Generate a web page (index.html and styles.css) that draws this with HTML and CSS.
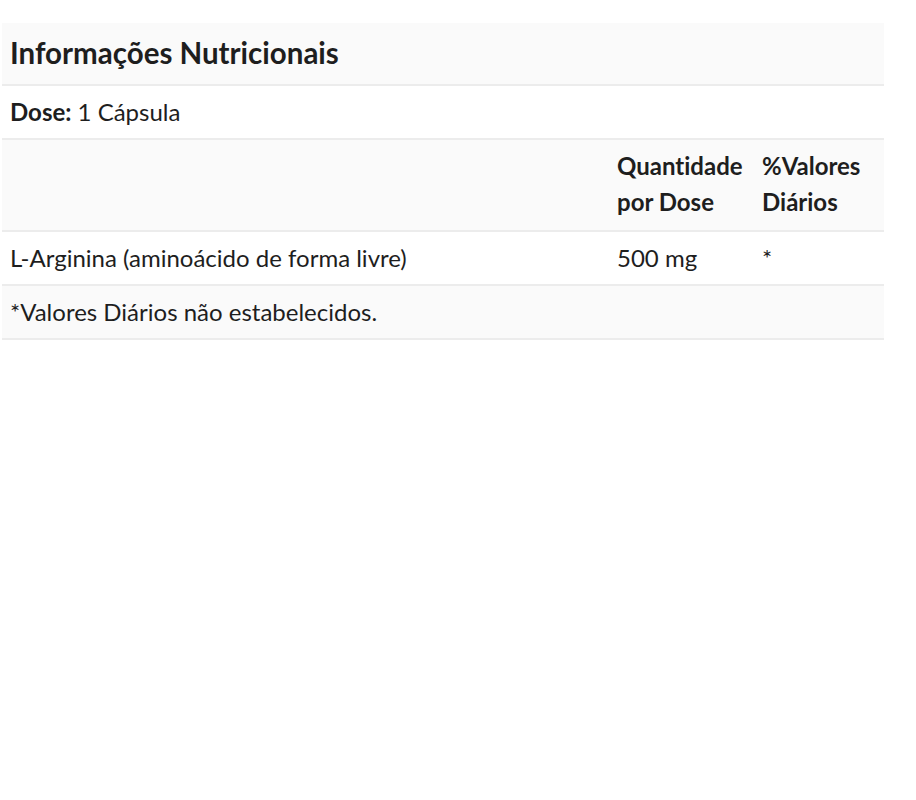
FILE: index.html
```
<!DOCTYPE html>
<html lang="pt">
  <head>
    <meta charset="UTF-8" />
    <meta name="viewport" content="width=device-width, initial-scale=1.0" />
    <title>Informações Nutricionais</title>
    <link rel="stylesheet" href="styles.css">
  </head>
  <body>
    <div class="facts-container">
      <table class="facts-table">
        <colgroup>
          <col class="col-name" />
          <col class="col-amount" />
          <col class="col-daily" />
        </colgroup>
        <thead>
          <tr class="title-row">
            <th colspan="3">Informações Nutricionais</th>
          </tr>
        </thead>
        <tbody>
          <tr class="dose-row">
            <td colspan="3"><strong>Dose:</strong> 1 Cápsula</td>
          </tr>
          <tr class="head-row">
            <td></td>
            <td><strong>Quantidade por Dose</strong></td>
            <td><strong>%Valores Diários</strong></td>
          </tr>
          <tr>
            <td>L-Arginina (aminoácido de forma livre)</td>
            <td>500 mg</td>
            <td>*</td>
          </tr>
          <tr class="note-row">
            <td colspan="3">*Valores Diários não estabelecidos.</td>
          </tr>
        </tbody>
      </table>
    </div>
  </body>
</html>
```

FILE: styles.css
```
body {
  margin: 0;
  background-color: #ffffff;
  font-family: Lato, "Open Sans", sans-serif;
  color: #1e1e1e;
}

.facts-container {
  padding: 23px 0 0 2px;
  width: 882px;
}

.facts-table {
  width: 100%;
  border-collapse: collapse;
  table-layout: fixed;
  font-size: 24px;
  font-variant-ligatures: none;
}

.col-name {
  width: 607px;
}

.col-amount {
  width: 145px;
}

.col-daily {
  width: 130px;
}

.facts-table th,
.facts-table td {
  padding: 0 8px 2px;
  text-align: left;
  vertical-align: middle;
  border-bottom: 2px solid #ececec;
}

.title-row th {
  height: 59px;
  font-size: 29.5px;
  font-weight: bold;
  background-color: #fafafa;
}

.facts-table td {
  height: 50px;
}

.facts-table .head-row td {
  height: auto;
  background-color: #fafafa;
  line-height: 36px;
  padding-top: 8px;
  padding-bottom: 10px;
}

.note-row td {
  background-color: #fafafa;
}
```
